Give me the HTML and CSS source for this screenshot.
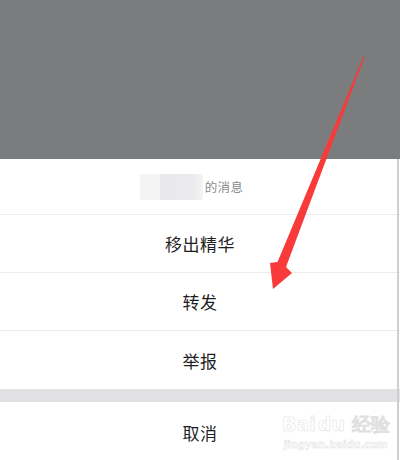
FILE: index.html
```html
<!DOCTYPE html>
<html lang="zh">
<head>
<meta charset="utf-8">
<link rel="stylesheet" href="styles.css">
</head>
<body>
<div class="screen">
  <div class="mask"></div>
  <div class="sheet">
    <div class="title-row">
      <span class="blur"><span class="blur-a"></span><span class="blur-b"></span></span>
      <span class="title">的消息</span>
    </div>
    <div class="row">移出精华</div>
    <div class="row">转发</div>
    <div class="row last">举报</div>
    <div class="gap"></div>
    <div class="row cancel">取消</div>
  </div>
  <div class="edge"></div>
  <svg class="arrow" width="400" height="460" viewBox="0 0 400 460">
    <polygon points="364.5,57 286,267 292,273 273,289 270,263 277.5,262 363.5,56.5" fill="#f93a3a"/>
  </svg>
  <div class="watermark">
    <div class="wm-logo">Bai<span class="wm-du">du</span> 经验</div>
    <div class="wm-url">jingyan.baidu.com</div>
  </div>
</div>
</body>
</html>
```
FILE: styles.css
```css
html, body {
  margin: 0;
  padding: 0;
}
body {
  width: 400px;
  height: 460px;
  overflow: hidden;
  background: #ffffff;
  font-family: "Noto Sans CJK SC", "Noto Sans", sans-serif;
}
.screen {
  position: relative;
  width: 400px;
  height: 460px;
  display: flex;
  flex-direction: column;
  overflow: hidden;
}
.mask {
  height: 159px;
  background: #7b7c7d;
  flex: none;
}
.sheet {
  flex: 1;
  display: flex;
  flex-direction: column;
  background: #ffffff;
}
.title-row {
  height: 56px;
  border-bottom: 1px solid #ececec;
  display: flex;
  align-items: center;
  justify-content: center;
  padding-right: 17px;
  box-sizing: border-box;
}
.blur {
  display: flex;
  height: 26px;
  margin-right: 2px;
}
.blur-a {
  width: 20px;
  background: #f4f4f5;
}
.blur-b {
  width: 43px;
  background: linear-gradient(90deg, #e8e8ea, #ececee 80%, #f4f4f5);
}
.title {
  font-size: 12.5px;
  color: #8a8a8c;
  letter-spacing: 0.3px;
}
.row {
  height: 58px;
  border-bottom: 1px solid #ececec;
  display: flex;
  align-items: center;
  justify-content: center;
  font-size: 17px;
  color: #1f1f1f;
  letter-spacing: 0.5px;
  box-sizing: border-box;
}
.row.last {
  height: 58px;
  border-bottom: none;
}
.gap {
  height: 13px;
  background: #e1e1e3;
  flex: none;
}
.row.cancel {
  border-bottom: none;
  height: 57px;
  padding-top: 3px;
}
.edge {
  position: absolute;
  right: 1px;
  top: 159px;
  bottom: 0;
  width: 2px;
  background: #cfcfcf;
}
.arrow {
  position: absolute;
  left: 0;
  top: 0;
}
.watermark {
  position: absolute;
  left: 282px;
  top: 405px;
  color: #ffffff;
  -webkit-text-stroke: 0.5px #e0e0e0;
  font-family: "DejaVu Sans", sans-serif;
  text-align: center;
}
.wm-logo {
  font-size: 19px;
  font-weight: bold;
  line-height: 22px;
  margin-top: 8px;
}
.wm-du {
  margin-left: 2px;
}
.wm-url {
  font-size: 10px;
  line-height: 14px;
  font-weight: bold;
  margin-top: 3px;
}
```
